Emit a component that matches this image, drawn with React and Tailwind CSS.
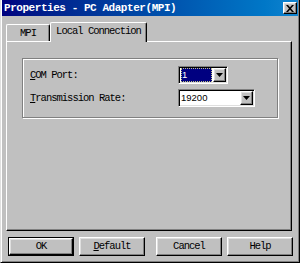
import React from "react";

const mono = "font-['Liberation_Mono','DejaVu_Sans_Mono',monospace]";
const raised =
  "border border-t-white border-l-white border-r-black border-b-black shadow-[inset_-1px_-1px_0_#808080,inset_1px_1px_0_#dfdfdf] bg-[#c0c0c0]";
const sunken =
  "border border-t-[#808080] border-l-[#808080] border-r-white border-b-white shadow-[inset_1px_1px_0_#000,inset_-1px_-1px_0_#dfdfdf]";

function DropButton() {
  return (
    <div className={`w-[13px] h-full flex items-center justify-center ${raised}`}>
      <svg width="7" height="4" viewBox="0 0 7 4">
        <path d="M0 0h7L3.5 4z" fill="#000" />
      </svg>
    </div>
  );
}

function Combo({ width, value, selected }) {
  return (
    <div className={`h-[18px] ${width} ${sunken} bg-white flex p-[1px]`}>
      <div className="flex-1 flex items-center pl-[1px] pr-[1px] min-w-0">
        {selected ? (
          <div className="h-full w-full bg-[#000080] outline outline-1 outline-dotted outline-[#c0c080] -outline-offset-1 flex items-center pl-[1px]">
            <span className="text-white text-[9.5px] font-['Liberation_Sans',Arial,sans-serif] leading-none">{value}</span>
          </div>
        ) : (
          <span className="text-black text-[9.5px] font-['Liberation_Sans',Arial,sans-serif] leading-none">{value}</span>
        )}
      </div>
      <DropButton />
    </div>
  );
}

function Button({ children, isDefault, className = "" }) {
  const inner = (
    <div className={`w-full h-full flex items-center justify-center ${raised}`}>
      <span className={`${mono} text-[10.5px] tracking-[-1px] text-black leading-none`}>{children}</span>
    </div>
  );
  if (isDefault) {
    return <div className={`w-[66px] h-[19px] border border-black ${className}`}>{inner}</div>;
  }
  return <div className={`w-[66px] h-[19px] ${className}`}>{inner}</div>;
}

export default function App() {
  return (
    <div className="w-[300px] h-[263px] bg-[#c0c0c0] border-l border-r border-b border-l-[#dfdfdf] border-r-black border-b-black shadow-[inset_1px_0_0_white,inset_-1px_-1px_0_#808080] flex flex-col px-[1px]">
      {/* Title bar */}
      <div className="h-[16px] bg-gradient-to-r from-[#000080] to-[#1084d0] flex items-center justify-between pl-[2px] pr-[1px]">
        <span className={`${mono} font-bold text-white text-[11px] tracking-[-0.45px] leading-none`}>
          Properties - PC Adapter(MPI)
        </span>
        <div className={`w-[14px] h-[12px] flex items-center justify-center ${raised}`}>
          <svg width="8" height="7" viewBox="0 0 8 7">
            <path d="M0 0h2l2 2.2L6 0h2L5 3.5 8 7H6L4 4.8 2 7H0l3-3.5z" fill="#000" />
          </svg>
        </div>
      </div>

      <div className="flex flex-col pl-[4px] mt-[6px]">
        {/* Tabs */}
        <div className="flex items-end h-[19px]">
          <div className="w-[44px] h-[17px] border-t border-l border-r border-t-white border-l-white border-r-black shadow-[inset_-1px_0_0_#808080] rounded-tl-[2px] rounded-tr-[2px] flex items-center justify-center">
            <span className={`${mono} text-[10.5px] tracking-[-1px] text-black leading-none`}>MPI</span>
          </div>
          <div className="relative z-10 mb-[-1px] w-[97px] h-[20px] bg-[#c0c0c0] border-t border-l border-r border-t-white border-l-white border-r-black shadow-[inset_-1px_0_0_#808080] rounded-tl-[2px] rounded-tr-[2px] flex items-center justify-center pb-[2px]">
            <span className={`${mono} text-[10.5px] tracking-[-1px] text-black leading-none`}>Local Connection</span>
          </div>
        </div>

        {/* Panel */}
        <div className="w-[286px] h-[190px] border border-t-white border-l-white border-r-black border-b-black shadow-[inset_-1px_-1px_0_#808080] pl-[15px] pt-[16px]">
          <div className="w-[256px] h-[60px] border border-[#808080] shadow-[inset_1px_1px_0_white,1px_1px_0_white] pl-[7px] pt-[7px] flex flex-col gap-[5px]">
            <div className="flex items-center">
              <span className={`w-[148px] ${mono} text-[10.5px] tracking-[-1px] text-black leading-none`}>
                <span className="underline underline-offset-1">C</span>OM Port:
              </span>
              <Combo width="w-[50px]" value="1" selected />
            </div>
            <div className="flex items-center">
              <span className={`w-[148px] ${mono} text-[10.5px] tracking-[-1px] text-black leading-none`}>
                <span className="underline underline-offset-1">T</span>ransmission Rate:
              </span>
              <Combo width="w-[77px]" value="19200" />
            </div>
          </div>
        </div>

        {/* Buttons */}
        <div className="flex mt-[6px] pl-[2px]">
          <Button isDefault>OK</Button>
          <Button className="ml-[5px]">
            <span className="underline underline-offset-1">D</span>efault
          </Button>
          <Button className="ml-[11px]">Cancel</Button>
          <Button className="ml-[5px]">Help</Button>
        </div>
      </div>
    </div>
  );
}
